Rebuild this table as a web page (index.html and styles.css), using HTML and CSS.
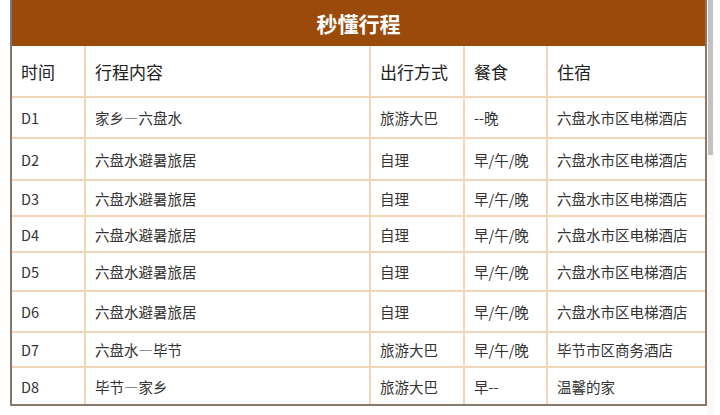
FILE: index.html
```html
<!DOCTYPE html>
<html lang="zh-CN">
<head>
<meta charset="utf-8">
<title>秒懂行程</title>
<link rel="stylesheet" href="styles.css">
</head>
<body>
<div class="box">
  <div class="title">秒懂行程</div>
  <table class="trip">
    <colgroup>
      <col class="c1"><col class="c2"><col class="c3"><col class="c4"><col class="c5">
    </colgroup>
    <tr class="head h52"><td>时间</td><td>行程内容</td><td>出行方式</td><td>餐食</td><td>住宿</td></tr>
    <tr class="h40"><td>D1</td><td>家乡—六盘水</td><td>旅游大巴</td><td>--晚</td><td>六盘水市区电梯酒店</td></tr>
    <tr class="h42"><td>D2</td><td>六盘水避暑旅居</td><td>自理</td><td>早/午/晚</td><td>六盘水市区电梯酒店</td></tr>
    <tr class="h36"><td>D3</td><td>六盘水避暑旅居</td><td>自理</td><td>早/午/晚</td><td>六盘水市区电梯酒店</td></tr>
    <tr class="h36"><td>D4</td><td>六盘水避暑旅居</td><td>自理</td><td>早/午/晚</td><td>六盘水市区电梯酒店</td></tr>
    <tr class="h39"><td>D5</td><td>六盘水避暑旅居</td><td>自理</td><td>早/午/晚</td><td>六盘水市区电梯酒店</td></tr>
    <tr class="h40"><td>D6</td><td>六盘水避暑旅居</td><td>自理</td><td>早/午/晚</td><td>六盘水市区电梯酒店</td></tr>
    <tr class="h35"><td>D7</td><td>六盘水—毕节</td><td>旅游大巴</td><td>早/午/晚</td><td>毕节市区商务酒店</td></tr>
    <tr class="h38"><td>D8</td><td>毕节—家乡</td><td>旅游大巴</td><td>早--</td><td>温馨的家</td></tr>
  </table>
</div>
<div class="scrollbar"><div class="thumb"></div></div>
</body>
</html>
```
FILE: styles.css
```css
html, body {
  margin: 0;
  padding: 0;
  background: #ffffff;
}
body {
  font-family: "Noto Sans CJK SC", "Noto Sans", sans-serif;
  padding-left: 10px;
}
.box {
  width: 697px;
  box-sizing: border-box;
  border: 2px solid #86786b;
  border-top: none;
  background: #fff;
}
.title {
  height: 46px;
  background: #9a4b0b;
  color: #ffffff;
  font-weight: bold;
  font-size: 21px;
  line-height: 46px;
  text-align: center;
}
.trip {
  width: 693px;
  table-layout: fixed;
  border-collapse: collapse;
  border-style: hidden;
}
.c1 { width: 73px; }
.c2 { width: 285px; }
.c3 { width: 94px; }
.c4 { width: 83px; }
.c5 { width: 158px; }
.trip td {
  border: 2px solid #f3d6ba;
  padding: 0 9px;
  font-size: 14.5px;
  color: #333;
  vertical-align: middle;
  white-space: nowrap;
}
.trip .head td {
  font-size: 17px;
  color: #222;
}
.h52 td { height: 50px; }
.h42 td { height: 40px; }
.h40 td { height: 39px; }
.h39 td { height: 37px; }
.h38 td { height: 36px; }
.h36 td { height: 34px; }
.h35 td { height: 33px; }
.scrollbar {
  position: absolute;
  top: 0;
  left: 707px;
  width: 7px;
  height: 415px;
  background: #fafafa;
}
.thumb {
  margin-left: 1px;
  width: 5px;
  height: 155px;
  background: #c2c2c2;
}
```
